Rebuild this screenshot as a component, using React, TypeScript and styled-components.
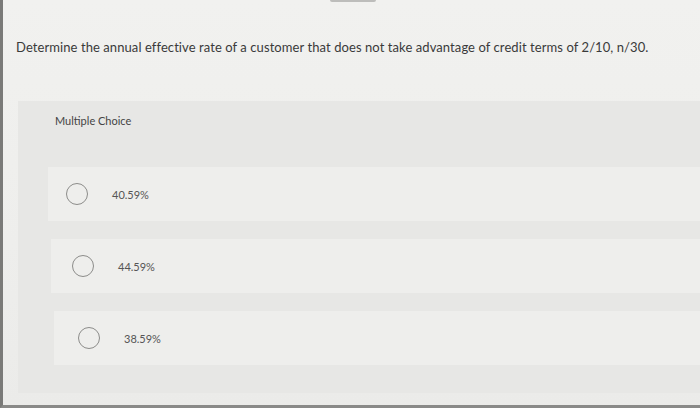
import styled, { createGlobalStyle } from "styled-components";

const GlobalStyle = createGlobalStyle`
  html, body {
    margin: 0;
    padding: 0;
    background: #ececea;
  }
`;

const options = ["40.59%", "44.59%", "38.59%"];

function App() {
  return (
    <>
      <GlobalStyle />
      <Screen>
        <TopTab />
        <Question>
          Determine the annual effective rate of a customer that does not take
          advantage of credit terms of 2/10, n/30.
        </Question>
        <Panel>
          <Label>Multiple Choice</Label>
          <Options>
            {options.map((o, i) => (
              <Option key={o} $shift={i * 3}>
                <Radio />
                <OptionText>{o}</OptionText>
              </Option>
            ))}
          </Options>
        </Panel>
      </Screen>
    </>
  );
}

const Screen = styled.div`
  position: relative;
  width: 700px;
  height: 408px;
  box-sizing: border-box;
  border-left: 3px solid #7a7a78;
  border-bottom: 3px solid #8a8a88;
  background: linear-gradient(180deg, #f1f1ef 0%, #eeeeec 60%, #ebebe9 100%);
  font-family: Lato, "Open Sans", sans-serif;
  color: #3a3a3a;
  overflow: hidden;
  display: flex;
  flex-direction: column;
`;

const TopTab = styled.div`
  position: absolute;
  top: 0;
  left: 327px;
  width: 46px;
  height: 2px;
  background: #bdbdbb;
  border-radius: 0 0 3px 3px;
`;

const Question = styled.p`
  margin: 38px 0 0 13px;
  font-size: 13px;
  line-height: 18px;
  letter-spacing: 0.08px;
  color: #3a3a3a;
`;

const Panel = styled.div`
  margin: 45px 0 12px 15px;
  flex: 1;
  background: #e7e7e5;
  display: flex;
  flex-direction: column;
  padding: 13px 0 0 37px;
`;

const Label = styled.div`
  font-size: 11px;
  color: #444;
  line-height: 14px;
`;

const Options = styled.div`
  margin: 39px 0 0 -7px;
  display: flex;
  flex-direction: column;
  gap: 18px;
`;

const Option = styled.div<{ $shift: number }>`
  height: 54px;
  background: #eeeeec;
  display: flex;
  align-items: center;
  padding-left: ${(p) => 18 + p.$shift}px;
  margin-left: ${(p) => p.$shift}px;
`;

const Radio = styled.span`
  width: 22px;
  height: 22px;
  border: 1px solid #8c8c8a;
  border-radius: 50%;
  box-sizing: border-box;
  flex-shrink: 0;
`;

const OptionText = styled.span`
  margin-left: 24px;
  font-size: 11px;
  color: #555;
`;

export default App;
